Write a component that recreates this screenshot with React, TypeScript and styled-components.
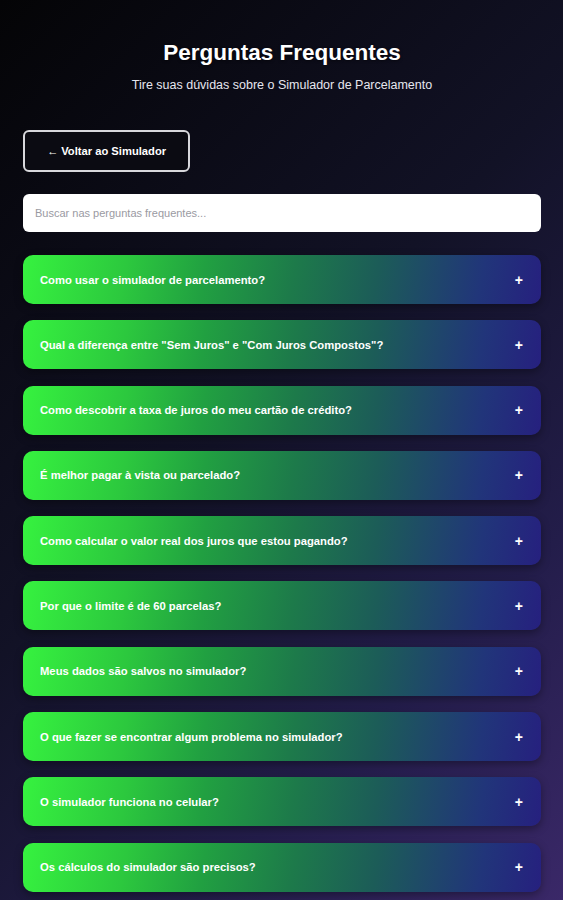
import React from "react";
import { styled, createGlobalStyle } from "styled-components";

const GlobalStyle = createGlobalStyle`
  html, body {
    margin: 0;
    padding: 0;
  }
  body {
    min-height: 100vh;
    font-family: "Liberation Sans", Arial, sans-serif;
    background: linear-gradient(135deg, #040406 0%, #121226 45%, #231d4a 75%, #3a2868 100%);
    background-attachment: fixed;
    color: #fff;
  }
`;

const Page = styled.div`
  padding: 40px 22px 0 23px;
  display: flex;
  flex-direction: column;
`;

const Header = styled.header`
  display: flex;
  flex-direction: column;
  align-items: center;
`;

const Title = styled.h1`
  margin: 0;
  font-size: 22.5px;
  font-weight: 700;
  color: #fff;
  text-shadow: 0 1px 3px rgba(0, 0, 0, 0.5);
`;

const Subtitle = styled.p`
  margin: 12px 0 0;
  font-size: 12.5px;
  color: #e6e6ee;
`;

const BackButton = styled.button`
  margin-top: 38px;
  align-self: flex-start;
  width: 167px;
  height: 42px;
  background: #0b0b12;
  border: 2px solid #d8d8dc;
  border-radius: 6px;
  color: #fff;
  font-family: "Liberation Sans", Arial, sans-serif;
  font-size: 11.2px;
  font-weight: 700;
  cursor: pointer;
`;

const Search = styled.input`
  margin-top: 22px;
  height: 38px;
  box-sizing: border-box;
  border: none;
  border-radius: 6px;
  padding: 0 12px;
  background: #fff;
  font-family: "Liberation Sans", Arial, sans-serif;
  font-size: 11px;
  color: #333;
  outline: none;
  &::placeholder {
    color: #9a9aa2;
  }
`;

const List = styled.div`
  margin-top: 23px;
  display: flex;
  flex-direction: column;
  gap: 16.3px;
`;

const Question = styled.button`
  display: flex;
  align-items: center;
  justify-content: space-between;
  height: 49px;
  padding: 0 18px 0 17px;
  border: none;
  border-radius: 10px;
  background: linear-gradient(100deg, #36f23f 0%, #2cc83e 20%, #21a041 35%, #1d7a4a 52%, #1c5c58 68%, #21357a 88%, #26207f 100%);
  box-shadow: 0 3px 8px rgba(0, 0, 0, 0.35);
  color: #fff;
  font-family: "Liberation Sans", Arial, sans-serif;
  font-size: 11.25px;
  font-weight: 700;
  text-align: left;
  cursor: pointer;
`;

const Plus = styled.span`
  font-size: 14px;
  font-weight: 700;
  line-height: 1;
`;

const questions = [
  "Como usar o simulador de parcelamento?",
  "Qual a diferença entre \"Sem Juros\" e \"Com Juros Compostos\"?",
  "Como descobrir a taxa de juros do meu cartão de crédito?",
  "É melhor pagar à vista ou parcelado?",
  "Como calcular o valor real dos juros que estou pagando?",
  "Por que o limite é de 60 parcelas?",
  "Meus dados são salvos no simulador?",
  "O que fazer se encontrar algum problema no simulador?",
  "O simulador funciona no celular?",
  "Os cálculos do simulador são precisos?",
];

export default function App() {
  return (
    <>
      <GlobalStyle />
      <Page>
        <Header>
          <Title>Perguntas Frequentes</Title>
          <Subtitle>Tire suas dúvidas sobre o Simulador de Parcelamento</Subtitle>
        </Header>
        <BackButton>← Voltar ao Simulador</BackButton>
        <Search placeholder="Buscar nas perguntas frequentes..." />
        <List>
          {questions.map((q) => (
            <Question key={q}>
              <span>{q}</span>
              <Plus>+</Plus>
            </Question>
          ))}
        </List>
      </Page>
    </>
  );
}
